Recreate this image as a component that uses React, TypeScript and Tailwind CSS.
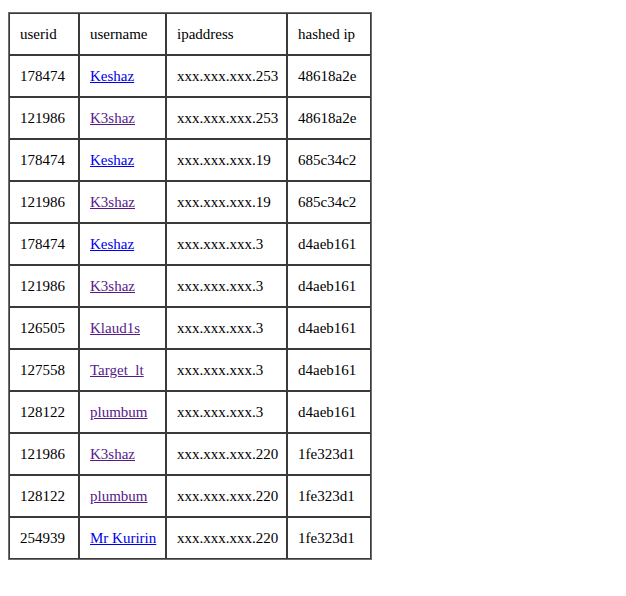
const rows: [string, string, boolean, string, string][] = [
  ["178474", "Keshaz", false, "xxx.xxx.xxx.253", "48618a2e"],
  ["121986", "K3shaz", true, "xxx.xxx.xxx.253", "48618a2e"],
  ["178474", "Keshaz", false, "xxx.xxx.xxx.19", "685c34c2"],
  ["121986", "K3shaz", true, "xxx.xxx.xxx.19", "685c34c2"],
  ["178474", "Keshaz", false, "xxx.xxx.xxx.3", "d4aeb161"],
  ["121986", "K3shaz", true, "xxx.xxx.xxx.3", "d4aeb161"],
  ["126505", "Klaud1s", true, "xxx.xxx.xxx.3", "d4aeb161"],
  ["127558", "Target_lt", true, "xxx.xxx.xxx.3", "d4aeb161"],
  ["128122", "plumbum", true, "xxx.xxx.xxx.3", "d4aeb161"],
  ["121986", "K3shaz", true, "xxx.xxx.xxx.220", "1fe323d1"],
  ["128122", "plumbum", true, "xxx.xxx.xxx.220", "1fe323d1"],
  ["254939", "Mr Kuririn", false, "xxx.xxx.xxx.220", "1fe323d1"],
];

const cell = "border border-[#3a3a3a] h-[42px] px-[10px] text-left align-middle font-normal whitespace-nowrap";

export default function App() {
  return (
    <div className="min-h-screen bg-white pl-2 pt-3 text-black text-[15px] font-['Liberation_Serif','Times_New_Roman',serif]">
      <table className="table-fixed border-separate border-spacing-0 border border-[#6e6e6e] w-[364px]">
        <colgroup>
          <col className="w-[70px]" />
          <col className="w-[87px]" />
          <col className="w-[121px]" />
          <col className="w-[84px]" />
        </colgroup>
        <thead>
          <tr>
            <th className={cell}>userid</th>
            <th className={cell}>username</th>
            <th className={cell}>ipaddress</th>
            <th className={cell}>hashed ip</th>
          </tr>
        </thead>
        <tbody>
          {rows.map((r, i) => (
            <tr key={i}>
              <td className={cell}>{r[0]}</td>
              <td className={cell}>
                <a href="#" className={r[2] ? "underline text-[#551a8b]" : "underline text-[#0000ee]"}>
                  {r[1]}
                </a>
              </td>
              <td className={cell}>{r[3]}</td>
              <td className={cell}>{r[4]}</td>
            </tr>
          ))}
        </tbody>
      </table>
    </div>
  );
}
